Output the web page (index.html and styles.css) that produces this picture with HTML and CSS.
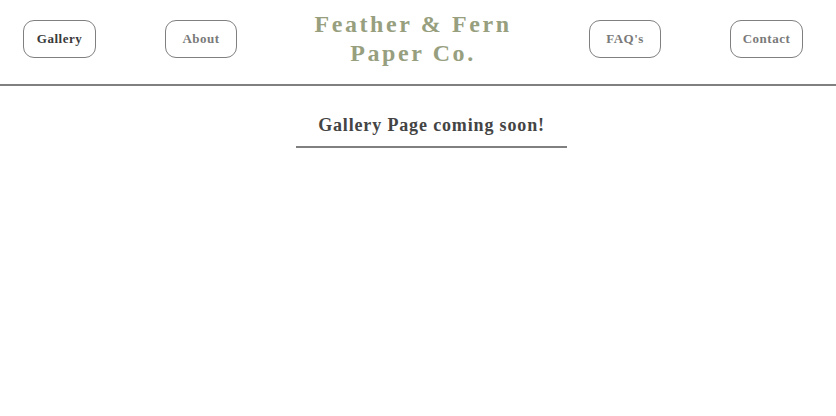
FILE: index.html
```html
<!DOCTYPE html>
<html lang="en">
<head>
<meta charset="utf-8">
<title>Gallery | Feather &amp; Fern Paper Co.</title>
<link rel="stylesheet" href="styles.css">
</head>
<body>
<header class="site-header">
  <nav class="nav">
    <a class="nav-btn wide active" href="#">Gallery</a>
    <a class="nav-btn" href="#">About</a>
    <div class="brand">Feather &amp; Fern<br>Paper Co.</div>
    <a class="nav-btn" href="#">FAQ's</a>
    <a class="nav-btn wide" href="#">Contact</a>
  </nav>
</header>
<main class="content">
  <h1 class="page-title">Gallery Page coming soon!</h1>
</main>
</body>
</html>
```
FILE: styles.css
```css
html, body {
  margin: 0;
  padding: 0;
  background: #ffffff;
}
body {
  font-family: "Liberation Serif", "DejaVu Serif", serif;
}
.site-header {
  height: 84px;
  border-bottom: 2px solid #808080;
}
.nav {
  display: flex;
  align-items: flex-start;
  padding-left: 23px;
  gap: 69px;
}
.nav-btn {
  box-sizing: border-box;
  margin-top: 20px;
  width: 72px;
  height: 38px;
  border: 1px solid #808080;
  border-radius: 11px;
  display: flex;
  align-items: center;
  justify-content: center;
  text-decoration: none;
  font-size: 13px;
  font-weight: bold;
  letter-spacing: 0.5px;
  color: #7a7a7a;
}
.nav-btn.wide {
  width: 73px;
}
.nav-btn.active {
  color: #3a3a3a;
}
.brand {
  width: 214px;
  margin-top: 10px;
  text-align: center;
  font-size: 24px;
  line-height: 29px;
  font-weight: bold;
  letter-spacing: 2.6px;
  color: #979f7f;
}
.content {
  display: flex;
  justify-content: center;
  padding-left: 27px;
  padding-top: 28px;
}
.page-title {
  margin: 0;
  width: 271px;
  text-align: center;
  font-size: 18px;
  line-height: 22px;
  font-weight: bold;
  letter-spacing: 0.85px;
  color: #444444;
  padding-bottom: 10px;
  border-bottom: 2px solid #808080;
}
```
